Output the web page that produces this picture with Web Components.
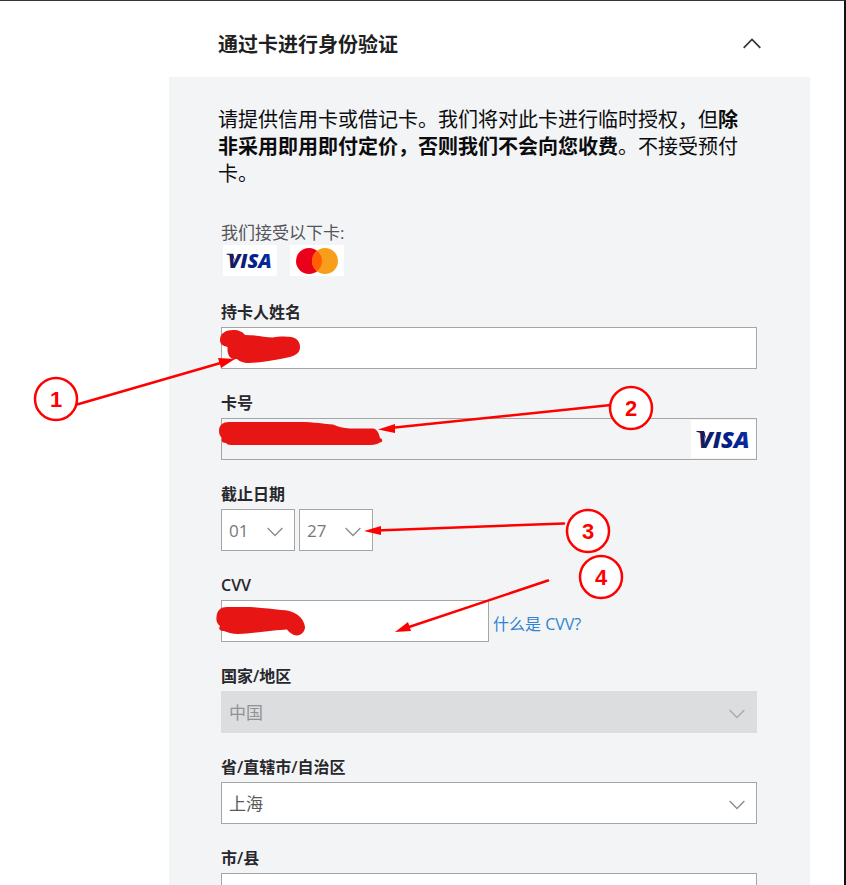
<!DOCTYPE html>
<html lang="zh-CN">
<head>
<meta charset="utf-8">
<title>通过卡进行身份验证</title>
<style>
html { height: 100%; scrollbar-width: none; }
body {
  margin: 0;
  height: 100%;
  overflow: hidden;
  background: #fff;
  color: #1f1f24;
  font-family: "Open Sans", "Noto Sans CJK SC", sans-serif;
  font-size: 16px;
}
</style>
</head>
<body>
<verify-page>
  <verify-section heading="通过卡进行身份验证">
    <p slot="intro">请提供信用卡或借记卡。我们将对此卡进行临时授权，但<b>除非采用即用即付定价，否则我们不会向您收费</b>。不接受预付卡。</p>
    <accepted-cards>我们接受以下卡:</accepted-cards>
    <text-field label="持卡人姓名"></text-field>
    <text-field label="卡号" brand></text-field>
    <expiry-field label="截止日期" month="01" year="27"></expiry-field>
    <text-field label="CVV" short><a slot="after" href="#cvv">什么是 CVV?</a></text-field>
    <select-field label="国家/地区" value="中国" disabled></select-field>
    <select-field label="省/直辖市/自治区" value="上海"></select-field>
    <text-field label="市/县"></text-field>
  </verify-section>
  <markup-layer slot="overlay"></markup-layer>
</verify-page>

<script>
const define = (name, render) => customElements.define(name, class extends HTMLElement {
  constructor() { super(); this.attachShadow({ mode: 'open' }); }
  connectedCallback() { this.shadowRoot.innerHTML = render(this); }
});

const fieldStyles = `
  * { box-sizing: border-box; }
  :host { display: block; }
  label, legend {
    display: block; padding: 0; margin-bottom: 5px;
    font-size: 16px; line-height: 20px; font-weight: 600; color: #27272c;
  }
  input, select {
    display: block; width: 100%; height: 42px; margin: 0; padding: 0 7px;
    border: 1px solid #a6a6a6; border-radius: 0; background: #fff;
    font: inherit; font-size: 17px; color: #5a5a5a; appearance: none;
  }
  select:disabled { background: #dcdddf; border-color: #dcdddf; color: #919294; opacity: 1; }
  .pick { display: grid; align-items: center; }
  .pick > * { grid-area: 1 / 1; }
  .pick svg { justify-self: end; width: 16px; height: 10px; margin: 4px 12px 0 0; pointer-events: none; }
`;
const chevron = (color) =>
  `<svg viewBox="0 0 16 10" fill="none" stroke="${color}" stroke-width="1.4" aria-hidden="true"><path d="M.6 1 8 8.4 15.4 1"/></svg>`;

define('verify-page', () => `
  <style>
    :host {
      display: block; position: relative; box-sizing: border-box; min-height: 100%;
      padding: 0 34px 0 169px; border-top: 1px solid #35343c; border-right: 2px solid #111114;
    }
  </style>
  <main><slot></slot></main>
  <slot name="overlay"></slot>`);

define('verify-section', (el) => `
  <style>
    :host { display: block; }
    h2 { margin: 0; padding: 30px 49px 18px; font-size: 20px; line-height: 28px; font-weight: 700; }
    button {
      display: flex; align-items: center; justify-content: space-between; width: 100%;
      padding: 0; border: 0; background: none; color: inherit; font: inherit; cursor: pointer;
    }
    button svg { width: 18px; height: 11px; margin-bottom: 4px; }
    .panel { background: #f3f4f6; padding: 29px 49px 40px; }
    ::slotted(p) { margin: 0 0 35px; padding-right: 12px; font-size: 20px; line-height: 27px; color: #0c0c0e; font-weight: 400; }
    .fields { display: flex; flex-direction: column; gap: 24px; padding: 0 4px 0 3px; }
  </style>
  <h2><button type="button" aria-expanded="true">${el.getAttribute('heading')}
    <svg viewBox="0 0 18 11" fill="none" stroke="#333338" stroke-width="1.7" aria-hidden="true"><path d="M.7 9.8 9 1.5l8.300 8.300"/></svg>
  </button></h2>
  <div class="panel">
    <slot name="intro"></slot>
    <form class="fields"><slot></slot></form>
  </div>`);

define('visa-mark', () => `
  <style>
    :host { display: block; width: 46px; height: 16px; }
    svg { display: block; width: 100%; height: 100%; overflow: visible; }
    text { font: italic 800 20px "Open Sans", sans-serif; }
  </style>
  <svg viewBox="0 0 46 16" role="img" aria-label="VISA">
    <defs><linearGradient id="g"><stop offset="0" stop-color="#1a1a55"/><stop offset=".6" stop-color="#00218c"/><stop offset="1" stop-color="#0a2ca0"/></linearGradient></defs>
    <path d="M-.5.800H6L8 8C6.500 4.500 4 2.300-.500 1.500Z" fill="#1a1a55"/>
    <text x="1" y="15" fill="url(#g)">VISA</text>
  </svg>`);

define('accepted-cards', () => `
  <style>
    :host { display: block; margin-bottom: 2px; }
    p { margin: 0 0 1px; font-size: 17px; line-height: 22px; color: #55555a; }
    div { display: flex; gap: 13px; padding-left: 2px; }
    span { display: grid; place-items: center; width: 54px; height: 31px; background: #fff; }
    span svg { width: 44px; height: 28px; }
  </style>
  <p><slot></slot></p>
  <div>
    <span><visa-mark></visa-mark></span>
    <span><svg viewBox="0 0 44 28" role="img" aria-label="Mastercard">
      <circle cx="14" cy="14" r="13" fill="#eb001b"/>
      <circle cx="30" cy="14" r="13" fill="#f79e1b"/>
      <path d="M22 3.750a13 13 0 0 1 0 20.500a13 13 0 0 1 0-20.500Z" fill="#ff5f00"/>
    </svg></span>
  </div>`);

define('text-field', (el) => `
  <style>${fieldStyles}
    .row { display: flex; align-items: center; gap: 4px; }
    .box { flex: 1; display: grid; align-items: center; }
    .box > * { grid-area: 1 / 1; }
    :host([short]) .box { flex: 0 0 50%; }
    :host([brand]) input { background: #f3f4f6; }
    .brand { justify-self: end; display: grid; place-items: center; width: 65px; height: 38px; margin-right: 1px; background: #fff; }
    .brand visa-mark { width: 54px; height: 19px; }
    ::slotted(a) { color: #2f83d0; text-decoration: none; font-size: 16px; line-height: 20px; padding-top: 6px; }
  </style>
  <label for="f">${el.getAttribute('label')}</label>
  <div class="row">
    <div class="box"><input id="f" type="text" autocomplete="off">${el.hasAttribute('brand') ? '<span class="brand"><visa-mark></visa-mark></span>' : ''}</div>
    <slot name="after"></slot>
  </div>`);

define('expiry-field', (el) => `
  <style>${fieldStyles}
    fieldset { margin: 0; padding: 0; border: 0; min-width: 0; }
    .row { display: flex; gap: 4px; }
    .pick { width: 74px; }
    select { color: #77777a; }
  </style>
  <fieldset>
    <legend>${el.getAttribute('label')}</legend>
    <div class="row">
      <div class="pick"><select aria-label="月"><option>${el.getAttribute('month')}</option></select>${chevron('#8c8c90')}</div>
      <div class="pick"><select aria-label="年"><option>${el.getAttribute('year')}</option></select>${chevron('#8c8c90')}</div>
    </div>
  </fieldset>`);

define('select-field', (el) => `
  <style>${fieldStyles}</style>
  <label for="f">${el.getAttribute('label')}</label>
  <div class="pick">
    <select id="f" ${el.hasAttribute('disabled') ? 'disabled' : ''}><option>${el.getAttribute('value')}</option></select>
    ${chevron(el.hasAttribute('disabled') ? '#a9aaad' : '#8c8c90')}
  </div>`);

/* Hand-drawn markup floating over the form: scribbles, arrows and numbered badges. */
define('markup-layer', () => `
  <style>
    :host { position: absolute; left: 0; top: -1px; pointer-events: none; }
    svg { display: block; width: 846px; height: 885px; }
    text { font: bold 22px "Liberation Sans", sans-serif; fill: #f00; text-anchor: middle; }
  </style>
  <svg viewBox="0 0 846 885">
    <g fill="#e81515">
      <path d="M220 340C220 333 226 330 233 330C239 330 243 332 245 335C256 335 264 337 273 337.500C279 336 286 336.500 291 337C297 338 300 342 300 347C300 353 296 355 290 357C280 359 268 362 249 363C243 363 239 361 237 359C230 360 227 355 227.500 347C223 346 220 344 220 340Z"/>
      <path d="M219 431C219 425 223 422 229 422H300C314 422 325 424 333 424.500C338 427 343 428 350 428.500H373C377 429 379 433 380 438C383 439 383 442 380 442.500C376 445 372 445 367 445H231C228 445 227 444 226 443C222 443 221 441 222 438C220 436 219 434 219 431Z"/>
      <path d="M216.500 617C217 610 221 607 227 607H251C263 608 272 609 281 610C294 610 304 617 305 627C305 632 301 635 297 635.500C292 635 289 632 287 629.500C275 630 255 633 238 634C232 634 227 632 224 631C220 631 218 629 220 626C217 624 216 621 216.500 617Z"/>
    </g>
    <g stroke="#f00" stroke-width="2.500" fill="none" stroke-linecap="round">
      <path d="M77 404.500 224 362M611 405 390 428M564 523.500 376 530.500M548 580.500 406 628"/>
    </g>
    <g fill="#f00">
      <path d="M235 359 218 358 221 368Z"/>
      <path d="M378 429.500 395 424 395 433Z"/>
      <path d="M364 531 381 526 381 535Z"/>
      <path d="M395 632 408 622 411 631Z"/>
    </g>
    <g stroke="#f00" stroke-width="2.500" fill="#fff">
      <circle cx="56" cy="399" r="21"/><circle cx="631" cy="408" r="21"/>
      <circle cx="588" cy="531" r="21"/><circle cx="601" cy="577" r="21"/>
    </g>
    <text x="56" y="407">1</text><text x="631" y="416">2</text>
    <text x="588" y="539">3</text><text x="601" y="585">4</text>
  </svg>`);
</script>
</body>
</html>
